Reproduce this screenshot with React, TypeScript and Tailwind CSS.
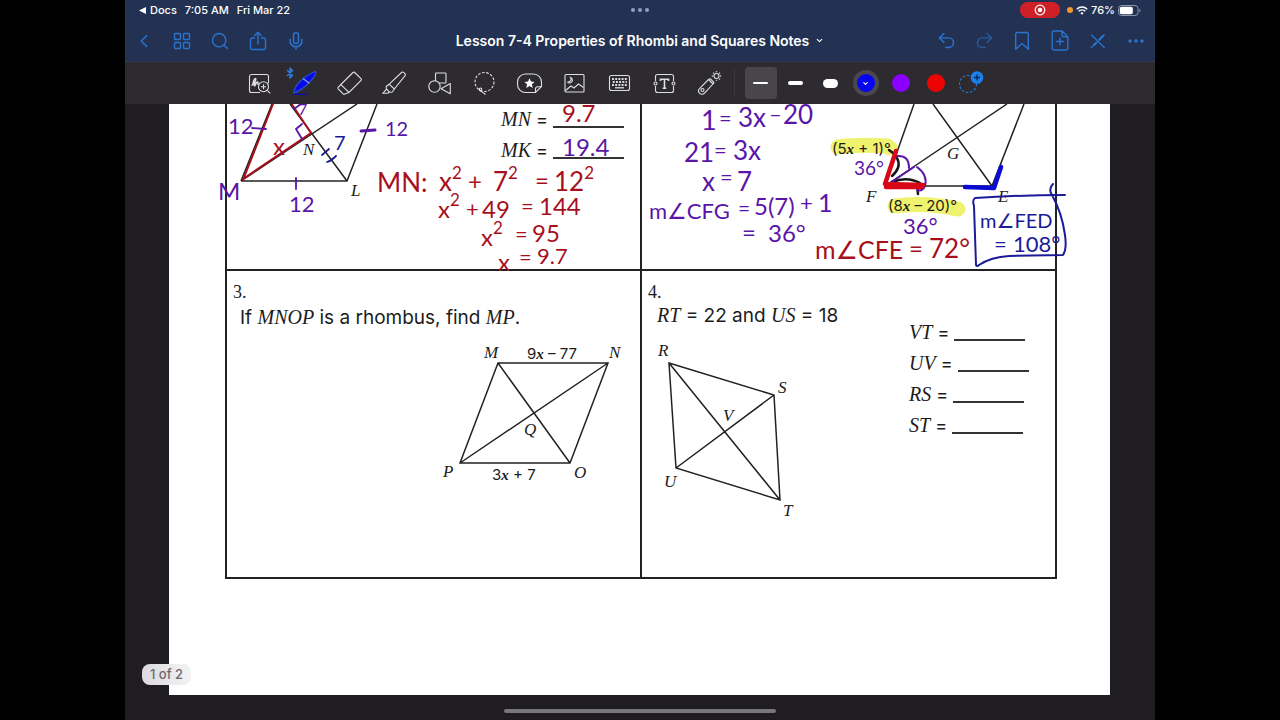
import type { ReactNode } from "react";
import {
  Bluetooth,
  ChevronDown,
  ChevronLeft,
  Mic,
  Redo2,
  Search,
  Undo2,
} from "lucide-react";

const UI = "font-['Inter','Liberation_Sans',sans-serif]";
const SERIF = "font-['Liberation_Serif',serif]";
const PRINT = "font-['Century_Gothic','Inter',sans-serif]";

const RED = "#a80f1c";
const PURPLE = "#5a15a8";
const NAVY = "#1b1b98";

export default function App() {
  return (
    <div className={`min-h-screen bg-black ${UI}`}>
      <div className="mx-auto flex min-h-screen w-full max-w-[1030px] flex-col overflow-hidden bg-[#1f1d21]">
        <header className="relative z-10 bg-[#233252]">
          <StatusBar />
          <NavBar />
        </header>
        <Toolbar />
        <main className="relative flex flex-1 flex-col">
          <Worksheet />
          <div className="flex flex-1 items-end justify-center pb-[7px]">
            <div className="h-1 w-[272px] rounded-full bg-[#77767a]" />
          </div>
        </main>
      </div>
    </div>
  );
}

function StatusBar() {
  return (
    <div className="grid h-5 grid-cols-3 items-center px-[14px] text-[11px] font-medium text-white">
      <div className="flex items-center gap-2 whitespace-nowrap">
        <a href="#docs" className="flex items-center gap-1">
          <svg width="7" height="7" viewBox="0 0 7 7" fill="currentColor">
            <path d="M7 0v7L0 3.5z" />
          </svg>
          Docs
        </a>
        <span>7:05 AM</span>
        <span>Fri Mar 22</span>
      </div>
      <div className="flex justify-center gap-[3px]">
        <i className="size-1 rounded-full bg-[#91a0c4]" />
        <i className="size-1 rounded-full bg-[#91a0c4]" />
        <i className="size-1 rounded-full bg-[#91a0c4]" />
      </div>
      <div className="flex items-center justify-end gap-[3px]">
        <button
          type="button"
          aria-label="Screen recording"
          className="mr-1 flex h-4 w-10 items-center justify-center rounded-full bg-[#cf2027]"
        >
          <svg width="12" height="12" viewBox="0 0 12 12">
            <circle cx="6" cy="6" r="4.8" fill="none" stroke="#fff" strokeWidth="1.2" />
            <circle cx="6" cy="6" r="2.3" fill="#fff" />
          </svg>
        </button>
        <i className="size-[6px] rounded-full bg-[#f0982a]" />
        <svg width="12" height="9" viewBox="0 0 12 9" fill="none" stroke="#fff" strokeWidth="1.6">
          <path d="M.8 3.2a7.4 7.4 0 0 1 10.4 0M2.7 5.3a4.7 4.7 0 0 1 6.6 0" />
          <path d="M6 8.8 4.3 7a2.4 2.4 0 0 1 3.4 0z" fill="#fff" stroke="none" />
        </svg>
        <span>76%</span>
        <svg width="23" height="11" viewBox="0 0 23 11">
          <rect x=".5" y=".5" width="19.5" height="10" rx="3" fill="none" stroke="#8c94a8" />
          <rect x="1.8" y="1.8" width="13" height="7.4" rx="1.8" fill="#fff" />
          <path d="M21.4 3.8v3.4q1.2-.6 1.2-1.7t-1.2-1.7z" fill="#8c94a8" />
        </svg>
      </div>
    </div>
  );
}

function NavBar() {
  return (
    <nav className="flex h-[42px] items-center justify-between border-b border-[#2f3a50] text-[#2a73cf]">
      <div className="flex flex-1">
        <NavButton label="Back">
          <ChevronLeft className="size-[22px]" strokeWidth={1.7} />
        </NavButton>
        <NavButton label="Thumbnails">
          <svg width="18" height="18" viewBox="0 0 18 18" fill="none" stroke="currentColor" strokeWidth="1.4">
            <rect x="1.5" y="1.5" width="6" height="6" rx="1" />
            <rect x="10.5" y="1.5" width="6" height="6" rx="1" />
            <rect x="1.5" y="10.5" width="6" height="6" rx="1" />
            <rect x="10.5" y="10.5" width="6" height="6" rx="1" />
          </svg>
        </NavButton>
        <NavButton label="Search">
          <Search className="size-[20px]" strokeWidth={1.7} />
        </NavButton>
        <NavButton label="Share">
          <svg width="18" height="20" viewBox="0 0 18 20" fill="none" stroke="currentColor" strokeWidth="1.4" strokeLinecap="round" strokeLinejoin="round">
            <path d="M5.5 7H3.2a1.700 1.700 0 0 0-1.700 1.700v8.100a1.700 1.700 0 0 0 1.700 1.700h11.600a1.700 1.700 0 0 0 1.700-1.700V8.700A1.700 1.700 0 0 0 14.800 7h-2.300M9 13V1.500M5.700 4.600 9 1.300l3.300 3.300" />
          </svg>
        </NavButton>
        <NavButton label="Record audio">
          <Mic className="size-[20px]" strokeWidth={1.8} />
        </NavButton>
      </div>
      <button type="button" className="flex items-center gap-[6px] whitespace-nowrap text-white">
        <h1 className="text-[14px] font-semibold">
          Lesson 7-4 Properties of Rhombi and Squares Notes
        </h1>
        <ChevronDown className="size-[9px]" strokeWidth={3} />
      </button>
      <div className="flex flex-1 justify-end">
        <NavButton label="Undo">
          <Undo2 className="size-[21px]" strokeWidth={1.7} />
        </NavButton>
        <NavButton label="Redo" dim>
          <Redo2 className="size-[21px]" strokeWidth={1.7} />
        </NavButton>
        <NavButton label="Bookmark">
          <svg width="16" height="20" viewBox="0 0 16 20" fill="none" stroke="currentColor" strokeWidth="1.4" strokeLinejoin="round">
            <path d="M1.700 3a1.500 1.500 0 0 1 1.500-1.500h9.600A1.500 1.500 0 0 1 14.300 3v15.300L8 12.500l-6.300 5.800z" />
          </svg>
        </NavButton>
        <NavButton label="Add page">
          <svg width="18" height="21" viewBox="0 0 18 21" fill="none" stroke="currentColor" strokeWidth="1.4" strokeLinecap="round" strokeLinejoin="round">
            <path d="M11 1H3.200a2 2 0 0 0-2 2v15a2 2 0 0 0 2 2h11.600a2 2 0 0 0 2-2V6.800zM11 1v4a1.800 1.800 0 0 0 1.800 1.800h4M9 8v7M5.500 11.500h7" />
          </svg>
        </NavButton>
        <NavButton label="Close pen tools">
          <svg width="16" height="16" viewBox="0 0 16 16" fill="none" stroke="currentColor" strokeWidth="1.3" strokeLinecap="round" strokeLinejoin="round">
            <path d="m1.500 2 12.800 12.500M14.200 1.800 9.200 6.800M6.700 9.300l-3.700 3.700-1.700 1.500" />
            <path d="m13 3-3.500 3.500M6 10l-2 2" strokeWidth="2.200" />
          </svg>
        </NavButton>
        <NavButton label="More">
          <svg width="16" height="4" viewBox="0 0 16 4" fill="currentColor">
            <circle cx="2" cy="2" r="1.700" />
            <circle cx="8" cy="2" r="1.700" />
            <circle cx="14" cy="2" r="1.700" />
          </svg>
        </NavButton>
      </div>
    </nav>
  );
}

function NavButton({ label, dim, children }: { label: string; dim?: boolean; children: ReactNode }) {
  return (
    <button
      type="button"
      aria-label={label}
      className={`flex h-8 w-[38px] items-center justify-center ${dim ? "opacity-60" : ""}`}
    >
      {children}
    </button>
  );
}

const TOOLS: { label: string; icon: ReactNode }[] = [
  {
    label: "Zoom window",
    icon: (
      <>
        <path d="M14 22.500H5.500a2 2 0 0 1-2-2v-14a2 2 0 0 1 2-2h15a2 2 0 0 1 2 2v7" />
        <path d="M5.500 15c1 .5 1.500-1 2-3.500s2-3.500 2.300-2.500-2.500 6-1.500 6.700 1.500-3.200 3-3.700c1-.3.500 2 1 3" strokeWidth="1.500" />
        <circle cx="17.500" cy="16.700" r="5" fill="#2d2b2f" />
        <path d="M15 16.700h5M17.500 14.200v5M21.200 20.400l3 3" />
      </>
    ),
  },
  {
    label: "Pen",
    icon: (
      <>
        <path d="M3 23c0-3 2.500-8.500 7.500-13S22.500 1.700 24.700 1.500c1 2-3 8-8.500 13S6 22 3 23z" fill="#0808e8" stroke="#2456c8" />
        <path d="m12 8.500 6.500 5" stroke="#8fa5e8" />
        <path d="M3 24.300h14" stroke="#0808c8" strokeWidth="1.200" />
      </>
    ),
  },
  {
    label: "Eraser",
    icon: (
      <>
        <path d="M17 2.500a1.200 1.200 0 0 1 1.700 0l6.300 6.200a1.200 1.200 0 0 1 0 1.700L13 22.500 4.800 14.600z" />
        <path d="m4.800 14.600-2.600 2.700q-.6.800 0 1.500l5.200 5.300q.6.500 1.500 0l4.100-1.600" />
      </>
    ),
  },
  {
    label: "Highlighter",
    icon: (
      <>
        <path d="M20.800 2.300q1-.7 1.800 0l1.500 1.500q.7.900 0 1.800L13.300 19 8.200 14.200z" />
        <path d="m8.200 14.200-2.700 2q-.6.700-.3 1.500l.3 1.500 3 2.800 1.500.2q1 .2 1.500-.5l1.800-2.700M5.500 19.200l-3.500 4h5l1.500-1.200" />
      </>
    ),
  },
  {
    label: "Shapes",
    icon: (
      <>
        <rect x="9.500" y="3" width="10.500" height="10" rx=".8" />
        <circle cx="8.500" cy="16.500" r="5.700" fill="#2d2b2f" />
        <path d="M24.300 13.500v10.300l-9.300-5z" fill="#2d2b2f" strokeLinejoin="round" />
      </>
    ),
  },
  {
    label: "Lasso",
    icon: (
      <>
        <circle cx="13.500" cy="12" r="9.500" strokeDasharray="2.600 1.600" />
        <path d="M9 18.500q-1.500 1.500.5 2.500t5 3.500" />
        <circle cx="9.500" cy="19.300" r="1.300" />
      </>
    ),
  },
  {
    label: "Elements",
    icon: (
      <>
        <path d="M18.500 22.500h-9a8 8 0 0 1-8-8v-2.500a8 8 0 0 1 8-8h8a8 8 0 0 1 8 8v4.500l-6 6z" />
        <path d="M25.300 16.700h-3.500a2.300 2.300 0 0 0-2.300 2.300v3.300" />
        <path d="m13.500 8.200 1.500 3.300 3.600.4-2.700 2.400.8 3.600-3.200-1.800-3.200 1.800.8-3.600-2.700-2.400 3.600-.4z" fill="#fff" stroke="none" />
      </>
    ),
  },
  {
    label: "Photo",
    icon: (
      <>
        <rect x="4" y="4.500" width="19" height="17.500" rx="1" />
        <path d="m4.500 20.500 5.500-4.500 3 2 4.500-4 5 3.500M9.500 7.500q2 3.500-2.800 4.700a2.800 2.800 0 1 0 2.800-4.700z" />
      </>
    ),
  },
  {
    label: "Keyboard",
    icon: (
      <>
        <rect x="3.500" y="5.500" width="20" height="15" rx="2" />
        <path d="M6 9h15.500M6.800 12h14M6 15h15.500" strokeWidth="1.800" strokeDasharray="1.900 1.300" />
        <path d="M9 17.800h9" strokeWidth="1.300" />
      </>
    ),
  },
  {
    label: "Text",
    icon: (
      <>
        <path d="M4.500 11V6.500a2 2 0 0 1 2-2h14a2 2 0 0 1 2 2V11M4.500 16v4.500a2 2 0 0 0 2 2h14a2 2 0 0 0 2-2V16" />
        <circle cx="4.500" cy="13.500" r="1.500" />
        <circle cx="22.500" cy="13.500" r="1.500" />
        <path d="M9.500 11V9.200h8V11M13.500 9.200v9M11.700 18.200h3.600" strokeWidth="1.600" />
      </>
    ),
  },
  {
    label: "Laser pointer",
    icon: (
      <>
        <path d="M12.500 9.500 17 14 8.500 23.200a3.300 3.300 0 0 1-5-4.500zM12.500 9.500l1.700-.8 3.800 3.800-1 1.500" strokeLinejoin="round" />
        <circle cx="6.500" cy="20" r="1.500" />
        <circle cx="20.500" cy="6" r="2.500" />
        <path d="M20.500 1.300v1M20.500 9.800v1M15.800 6h1M24.200 6h1M17.200 2.700l.7.700M23.200 8.700l.7.700M23.900 2.700l-.7.700" strokeWidth="1.400" />
      </>
    ),
  },
];

function Toolbar() {
  return (
    <div className="relative z-10 flex h-[42px] items-center bg-[#2d2b2f] pl-[112px]" role="toolbar">
      {TOOLS.map((t) => (
        <button
          key={t.label}
          type="button"
          aria-label={t.label}
          className="relative flex h-8 w-[45px] shrink-0 items-center justify-center"
        >
          <svg width="27" height="27" viewBox="0 0 27 27" fill="none" stroke="#dedee0" strokeWidth="1.100">
            {t.icon}
          </svg>
          {t.label === "Pen" && (
            <Bluetooth className="absolute left-[2px] top-0 size-3 text-[#2a7be0]" strokeWidth={3} />
          )}
        </button>
      ))}
      <div className="ml-[2px] mr-2 h-7 w-px bg-[#3a383d]" />
      <ToolSlot label="Thin stroke" active>
        <i className="h-[2px] w-[15px] rounded-full bg-white" />
      </ToolSlot>
      <ToolSlot label="Medium stroke">
        <i className="h-1 w-[15px] rounded-full bg-white" />
      </ToolSlot>
      <ToolSlot label="Thick stroke">
        <i className="h-[9px] w-[15px] rounded-full bg-white" />
      </ToolSlot>
      <ToolSlot label="Blue">
        <span className="flex size-[26px] items-center justify-center rounded-full bg-[#4a484d]">
          <span className="flex size-[18px] items-center justify-center rounded-full bg-[#0505f0]">
            <ChevronDown className="size-[7px] text-white" strokeWidth={3.5} />
          </span>
        </span>
      </ToolSlot>
      <ToolSlot label="Purple">
        <i className="size-[18px] rounded-full bg-[#8b00ff]" />
      </ToolSlot>
      <ToolSlot label="Red">
        <i className="size-[18px] rounded-full bg-[#ee0303]" />
      </ToolSlot>
      <ToolSlot label="Add colour">
        <svg width="26" height="26" viewBox="0 0 26 26" fill="none">
          <circle cx="10" cy="14" r="8.500" stroke="#2a7ad6" strokeWidth="1.100" strokeDasharray="2.500 1.800" />
          <circle cx="19" cy="7.500" r="6.300" fill="#1b80ea" />
          <path d="M16 7.500h6M19 4.500v6" stroke="#10294d" strokeWidth="1.300" />
        </svg>
      </ToolSlot>
    </div>
  );
}

function ToolSlot({ label, active, children }: { label: string; active?: boolean; children: ReactNode }) {
  return (
    <div className="flex w-[35px] shrink-0 justify-center">
      <button
        type="button"
        aria-label={label}
        className={`flex size-8 items-center justify-center rounded ${active ? "bg-[#48464b]" : ""}`}
      >
        {children}
      </button>
    </div>
  );
}

function Worksheet() {
  return (
    <article className="relative ml-[44px] mr-[45px] bg-white pr-[53px] pb-[116px] pl-[56px] text-[#1c1c1c]">
      <div className="grid grid-cols-[415fr_413fr] border-x-2 border-[#222]">
        <ProblemOne />
        <ProblemTwo />
        <ProblemThree />
        <ProblemFour />
      </div>
      <div className="absolute bottom-[10px] left-[-27px] rounded-lg bg-linear-to-r from-[#dcdade] to-[#f3f3f4] px-2 text-[13px] leading-[21px] font-medium text-[#6b696e]">
        1 of 2
      </div>
    </article>
  );
}

function ProblemOne() {
  return (
    <section className="relative flex min-h-[167px] border-r-2 border-b-2 border-[#222]">
      <Figure x={227} y={104} w={168} h={100}>
        <path d="M241 181H347L377 104M241 181 272 104M241 181 357 104M347 181 290 104" />
        <Label x={303} y={155}>N</Label>
        <Label x={351} y={196}>L</Label>
      </Figure>
      <ul className="ml-[106px]">
        <Blank name="MN" />
        <Blank name="MK" />
      </ul>
      <Ink x={227} y={104} w={413} h={165}>
        <path d="M243 180 273 104M243 179 311 133 291 103" stroke={RED} strokeWidth="2" />
        <g stroke={PURPLE} strokeWidth="1.800">
          <path d="M252 128l14 1M296 178v11M302 139l-6-10 6-5" />
          <path d="M361 131l14-1" strokeWidth="3" />
        </g>
        <path d="M322 155l7-6M327 162q4-1 9-6" stroke={NAVY} />
        <path d="M294 109l7-5" stroke={PURPLE} />
        <Write x={228} y={134} size={22} color={PURPLE}>12</Write>
        <Write x={385} y={136} size={20} color={PURPLE}>12</Write>
        <Write x={289} y={212} size={22} color={PURPLE}>12</Write>
        <Write x={218} y={200} size={24} color={PURPLE}>M</Write>
        <Write x={298} y={115} size={16} color={PURPLE}>7</Write>
        <Write x={334} y={150} size={20} color={NAVY}>7</Write>
        <Write x={273} y={155} size={24} color={RED}>x</Write>
        <Write x={562} y={122} size={24} color={RED}>9.7</Write>
        <Write x={562} y={156} size={24} color={PURPLE}>19.4</Write>

        <Write x={377} y={192} size={26} color={RED}>MN:</Write>
        <Write x={439} y={191} size={26} color={RED} sup="2">x</Write>
        <Write x={468} y={190} size={24} color={RED}>+</Write>
        <Write x={493} y={191} size={26} color={RED} sup="2">7</Write>
        <Write x={535} y={189} size={24} color={RED}>=</Write>
        <Write x={554} y={191} size={26} color={RED} sup="2">12</Write>

        <Write x={438} y={218} size={24} color={RED} sup="2">x</Write>
        <Write x={466} y={217} size={22} color={RED}>+</Write>
        <Write x={482} y={218} size={24} color={RED}>49</Write>
        <Write x={521} y={214} size={22} color={RED}>=</Write>
        <Write x={539} y={215} size={24} color={RED}>144</Write>

        <Write x={481} y={246} size={24} color={RED} sup="2">x</Write>
        <Write x={515} y={242} size={22} color={RED}>=</Write>
        <Write x={532} y={242} size={24} color={RED}>95</Write>

        <Write x={498} y={271} size={24} color={RED}>x</Write>
        <Write x={519} y={265} size={22} color={RED}>=</Write>
        <Write x={537} y={264} size={22} color={RED}>9.7</Write>
      </Ink>
    </section>
  );
}

function ProblemTwo() {
  return (
    <section className="relative min-h-[167px] border-b-2 border-[#222] pl-[184px]">
      <Figure x={826} y={104} w={229} h={120}>
        <path
          d="M838 147q20-3 49-1l3 2M895 206q30-4 63 3"
          stroke="#eff26d"
          strokeWidth="15"
          strokeLinecap="round"
        />
        <path d="M885 186H992L1024 104M885 186 914 104M885 186 1007 104M992 186 933 104" />
        <text x="832" y="154" {...labelProps}>
          (5<tspan className={SERIF} fontStyle="italic" fontWeight="700">x</tspan> + 1)°
        </text>
        <text x="888" y="211" {...labelProps}>
          (8<tspan className={SERIF} fontStyle="italic" fontWeight="700">x</tspan> – 20)°
        </text>
        <Label x={947} y={159}>G</Label>
        <Label x={866} y={202}>F</Label>
        <Label x={998} y={202}>E</Label>
      </Figure>
      <Ink x={642} y={104} w={413} h={165}>
        <path d="M897 158q5 9-5 18M892 182q15-6 28 1-3 4-2 11M889 150l4 3" stroke="#161616" strokeWidth="2.500" />
        <path d="M897 156q12-1 12 12M917 167q11 8 8 19-3 6-8 4M890 183l24-16" stroke={PURPLE} strokeWidth="2" />
        <path d="M896 151l-11 33 38 1M886 187h36" stroke="#d80716" strokeWidth="4.500" />
        <path d="M965 187l29 1 7-21" stroke="#0a0ad2" strokeWidth="4.500" />
        <path
          d="M1065 195q-45 0-90 3-3 2-1 8l2 59q1 2 3 0 12-8 30-9l54-1q4-6 2-20-3-22-13-40-4-6 1-11"
          stroke={NAVY}
          strokeWidth="2"
        />
        <g fill={PURPLE}>
          <Write x={701} y={130} size={27}>1</Write>
          <Write x={719} y={126} size={22}>=</Write>
          <Write x={738} y={127} size={26}>3x</Write>
          <Write x={769} y={122} size={22}>–</Write>
          <Write x={783} y={124} size={26}>20</Write>
          <Write x={684} y={162} size={26}>21</Write>
          <Write x={714} y={158} size={22}>=</Write>
          <Write x={733} y={160} size={26}>3x</Write>
          <Write x={702} y={191} size={26}>x</Write>
          <Write x={720} y={185} size={22}>=</Write>
          <Write x={737} y={191} size={26}>7</Write>

          <Write x={649} y={219} size={22}>m∠CFG</Write>
          <Write x={738} y={216} size={21}>=</Write>
          <Write x={754} y={215} size={24}>5(7)</Write>
          <Write x={800} y={211} size={22}>+</Write>
          <Write x={818} y={212} size={25}>1</Write>
          <Write x={742} y={241} size={24}>=</Write>
          <Write x={768} y={242} size={24}>36°</Write>
          <Write x={854} y={175} size={19}>36°</Write>
          <Write x={903} y={234} size={22}>36°</Write>
        </g>
        <g fill={RED}>
          <Write x={815} y={259} size={25}>m∠CFE</Write>
          <Write x={909} y={257} size={24}>=</Write>
          <Write x={929} y={258} size={26}>72°</Write>
        </g>
        <g fill={NAVY}>
          <Write x={980} y={228} size={20}>m∠FED</Write>
          <Write x={994} y={252} size={22}>=</Write>
          <Write x={1013} y={252} size={22}>108°</Write>
        </g>
      </Ink>
    </section>
  );
}

function ProblemThree() {
  return (
    <section className="min-h-[308px] border-r-2 border-b-2 border-[#222] pt-[11px]">
      <p className={`pl-[6px] text-[18px] leading-5 ${SERIF}`}>3.</p>
      <p className={`mt-[3px] pl-[13px] text-[19px] leading-6 ${PRINT}`}>
        If <Var>MNOP</Var> is a rhombus, find <Var>MP</Var>.
      </p>
      <div className="mt-2 flex justify-end pr-[10px]">
        <Figure x={440} y={338} w={190} h={150}>
          <path d="M498 363H608L570 463H460zM498 363 570 463M460 463 608 363" />
          <Label x={484} y={358}>M</Label>
          <Label x={609} y={358}>N</Label>
          <Label x={524} y={435}>Q</Label>
          <Label x={443} y={477}>P</Label>
          <Label x={574} y={478}>O</Label>
          <text x="527" y="359" {...labelProps}>
            9<tspan className={SERIF} fontStyle="italic" fontWeight="700">x</tspan> – 77
          </text>
          <text x="492" y="480" {...labelProps}>
            3<tspan className={SERIF} fontStyle="italic" fontWeight="700">x</tspan> + 7
          </text>
        </Figure>
      </div>
    </section>
  );
}

function ProblemFour() {
  return (
    <section className="flex min-h-[308px] border-b-2 border-[#222]">
      <div className="w-[267px] shrink-0 pt-[11px]">
        <p className={`pl-[6px] text-[18px] leading-5 ${SERIF}`}>4.</p>
        <p className={`mt-px pl-[15px] text-[19px] leading-6 ${PRINT}`}>
          <Var>RT</Var> = 22 and <Var>US</Var> = 18
        </p>
        <div className="mt-2 pl-[10px]">
          <Figure x={652} y={335} w={150} h={185}>
            <path d="M669 362 774 394 780 499 676 467zM669 362 780 499M676 467 774 394" />
            <Label x={658} y={355}>R</Label>
            <Label x={778} y={392}>S</Label>
            <Label x={723} y={420}>V</Label>
            <Label x={664} y={486}>U</Label>
            <Label x={783} y={515}>T</Label>
          </Figure>
        </div>
      </div>
      <ul className="pt-[46px]">
        <Blank name="VT" />
        <Blank name="UV" />
        <Blank name="RS" />
        <Blank name="ST" />
      </ul>
    </section>
  );
}

function Blank({ name }: { name: string }) {
  return (
    <li className={`flex h-[31px] items-center gap-[5px] text-[18px] leading-[18px] ${PRINT}`}>
      <span>
        <Var>{name}</Var> =
      </span>
      <span className="h-[17px] w-[71px] border-b-2 border-[#333]" />
    </li>
  );
}

function Var({ children }: { children: ReactNode }) {
  return <i className={`text-[20px] ${SERIF}`}>{children}</i>;
}

const labelProps = {
  className: "font-['Century_Gothic','Inter',sans-serif]",
  fontSize: 15,
  fill: "#1c1c1c",
  stroke: "none",
};

function Label({ x, y, children }: { x: number; y: number; children: ReactNode }) {
  return (
    <text x={x} y={y} className={SERIF} fontSize="17" fontStyle="italic" fill="#1c1c1c" stroke="none">
      {children}
    </text>
  );
}

interface CanvasProps {
  x: number;
  y: number;
  w: number;
  h: number;
  children: ReactNode;
}

function Figure({ x, y, w, h, children }: CanvasProps) {
  return (
    <svg width={w} height={h} viewBox={`${x} ${y} ${w} ${h}`} className="shrink-0" fill="none" stroke="#222" strokeWidth="1.500">
      {children}
    </svg>
  );
}

// Pen strokes sit above the printed sheet and may run over cell borders.
function Ink({ x, y, w, h, children }: CanvasProps) {
  return (
    <svg
      width={w}
      height={h}
      viewBox={`${x} ${y} ${w} ${h}`}
      className="pointer-events-none absolute left-0 top-0 max-w-none overflow-visible"
      fill="none"
      strokeWidth="1.800"
      strokeLinecap="round"
      strokeLinejoin="round"
    >
      {children}
    </svg>
  );
}

interface WriteProps {
  x: number;
  y: number;
  size: number;
  color?: string;
  sup?: string;
  children: ReactNode;
}

function Write({ x, y, size, color, sup, children }: WriteProps) {
  return (
    <text x={x} y={y} fontSize={size} fill={color} className="font-['Lato','DejaVu_Sans',sans-serif]">
      {children}
      {sup && (
        <tspan dy={-12} fontSize={17}>
          {sup}
        </tspan>
      )}
    </text>
  );
}
